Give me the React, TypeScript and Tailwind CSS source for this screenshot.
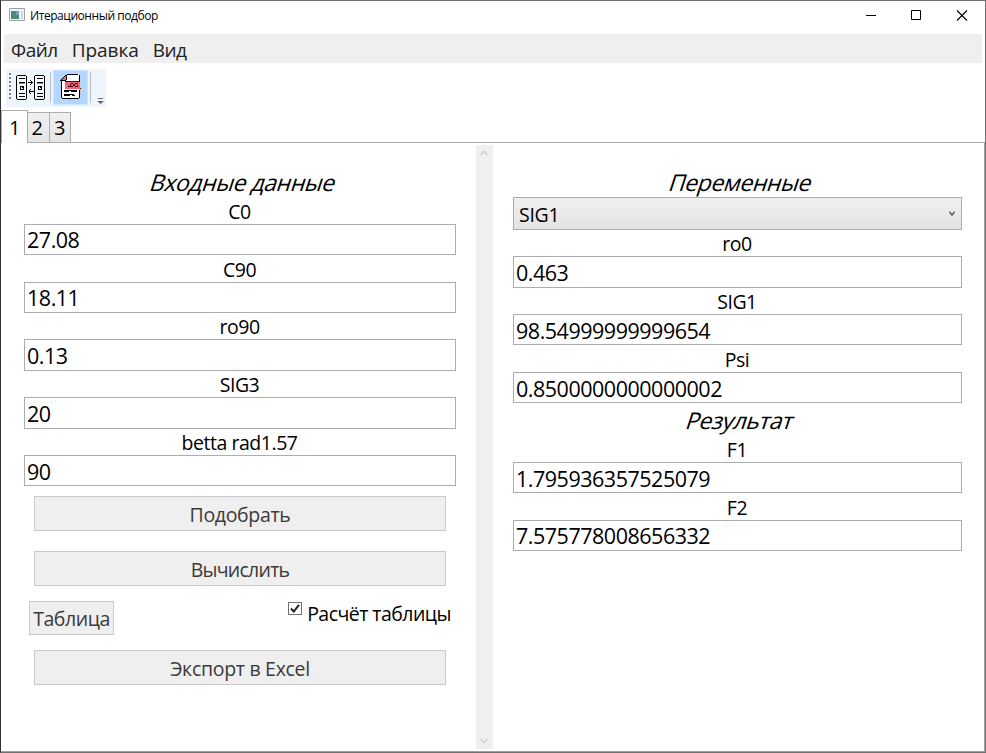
import type { ReactNode } from 'react';

function Label({ children, className = '' }: { children: ReactNode; className?: string }) {
  return (
    <div className={`flex h-[25px] shrink-0 items-center justify-center pr-px text-[19.5px] leading-none tracking-[-0.45px] ${className}`}>
      {children}
    </div>
  );
}

function Heading({ children, className = '' }: { children: ReactNode; className?: string }) {
  return (
    <div className={`flex h-7 shrink-0 items-center justify-center pl-[6px] text-[23px] leading-none tracking-[-0.42px] ${className}`}>
      <span className="inline-block skew-x-[-18deg]">{children}</span>
    </div>
  );
}

function Field({ value, tall = false, low = false }: { value: string; tall?: boolean; low?: boolean }) {
  return (
    <div className={`flex shrink-0 items-center border border-[#abadb3] bg-white pl-[2px] text-[21.5px] leading-none tracking-[-0.48px] ${tall ? 'h-8' : 'h-[31px]'}`}>
      <span className={low ? 'pt-[3px]' : 'pt-px'}>{value}</span>
    </div>
  );
}

function WideButton({ children, className = '' }: { children: ReactNode; className?: string }) {
  return (
    <button className={`mx-[10px] flex h-[35px] shrink-0 items-center justify-center border border-[#c9c9c9] bg-[#efefef] pt-[2px] text-[19.5px] leading-none text-[#3a3a3a] ${className}`}>
      {children}
    </button>
  );
}

function Chevron({ up = false }: { up?: boolean }) {
  return (
    <svg width="8" height="6" viewBox="0 0 8 6" fill="none" stroke="#cdcdcd" strokeWidth="1.5">
      <path d={up ? 'M.500 5L4 1.300 7.500 5' : 'M.500 1L4 4.700 7.500 1'} />
    </svg>
  );
}

function ServersIcon() {
  return (
    <svg width="30" height="25" viewBox="0 0 30 25" fill="none" stroke="#000" shapeRendering="crispEdges">
      {[0, 18].map((x) => (
        <g key={x} transform={`translate(${x} 0)`}>
          <path d="M1 1h9v23H1z" fill="#f4f9fe" stroke="none" />
          <path d="M1 .5h9M1 24.500h9M.5 1v23M10.500 1v23" />
          <path d="M3 3.500h6" />
          <path d="M3 7.500h6" />
          <path d="M3 8.500h6" stroke="#8a8a8a" />
          <path d="M4 11.500h4M4.500 11v4M7.500 12v3M4 14.500h4M6 12.500h1" />
          <path d="M3 18.500h6M3 21.500h6" />
        </g>
      ))}
      <path d="M12 7.500h5M15.500 6v3M14.500 5v1M14.500 9v1" />
      <path d="M13 16.500h5M13.500 15v3M14.500 14v1M14.500 18v1" />
    </svg>
  );
}

function LogIcon() {
  return (
    <svg width="22" height="28" viewBox="0 0 22 28" fill="none" shapeRendering="crispEdges">
      <path d="M7 0h12v25H2V7h5z" fill="#fff" />
      <path d="M6 1v5H1z" fill="#ff5c77" />
      <path d="M7 .5h11M6.500 1v5M0 6.500h6M5 1.500h1M4 2.500h1M3 3.500h1M2 4.500h1M1 5.500h1M1.500 7v17M19.500 1v7M19.500 16v8M2 24.500h17" stroke="#000" />
      <path d="M5 7h15v8H5z" fill="#ff5c77" />
      <path d="M5 7.500h15M20.500 14v1" stroke="#26171a" />
      <path d="M8 12.500h2M11 9.500h2M10.500 10v3M13.500 10v2M11 12.500h2M15 9.500h3M14.500 10v2M15 12.500h3M17.500 11v1" stroke="#26171a" />
      <path d="M4 16.500h13M4 17.500h5M11 17.500h6M4 20.500h10M4 21.500h6M12 21.500h3" stroke="#000" />
      <path d="M20 16.500h1" stroke="#f3a044" />
      <path d="M20 19.500h1" stroke="#ff8294" />
      <path d="M9 26.500h1" stroke="#45bde5" />
    </svg>
  );
}

export default function App() {
  return (
    <div className="flex h-[753px] w-[986px] flex-col overflow-hidden border border-l-[#333] border-r-[#707070] border-t-[#707070] border-b-[#707070] bg-white font-['Open_Sans','Noto_Sans',sans-serif] text-black">
      <header className="flex h-[33px] shrink-0 items-start">
        <svg className="ml-2 mt-[7px]" width="16" height="13" viewBox="0 0 16 13">
          <path d="M.5.500h15v12H.5z" fill="#f0f2f3" stroke="#9aa3a8" />
          <path d="M2 3h8v8H2z" fill="#478c7a" />
          <path d="M7 3h3v4H7z" fill="#6aa6c2" />
          <path d="M12 3h2v8h-2z" fill="#d3dade" />
        </svg>
        <h1 className="ml-[5px] mt-[8px] text-[12px] leading-[14px] tracking-[-0.44px]">Итерационный подбор</h1>
        <div className="ml-auto flex pr-[17px] pt-[9px]">
          <svg width="102" height="11" viewBox="0 0 102 11" fill="none" stroke="#000">
            <path d="M0 5.500h10M45.500.500h9v9h-9z" />
            <path d="M91 .5l10 10M101 .5l-10 10" strokeWidth="1.100" />
          </svg>
        </div>
      </header>
      <nav className="ml-[3px] mr-[3px] flex h-[29px] shrink-0 items-center gap-[14px] bg-[#efefef] pl-[7px] pt-[3px] text-[19px] leading-none text-[#222]">
        <span className="tracking-[-0.5px]">Файл</span>
        <span className="tracking-[-0.05px]">Правка</span>
        <span className="tracking-[-0.5px]">Вид</span>
      </nav>
      <div className="ml-[5px] mt-[6px] flex h-[38px] w-[100px] shrink-0 rounded-[3px] bg-[#eef5fd]">
        <div className="ml-[3px] mt-1 h-[28px] w-[2px] bg-[repeating-linear-gradient(#808080_0_2px,transparent_2px_4px)]" />
        <div className="ml-[5px] mt-[6px]"><ServersIcon /></div>
        <div className="ml-1 mt-[3px] h-[31px] w-px bg-[#b5bcc5]" />
        <div className="ml-[2px] mt-px flex h-[35px] w-[35px] items-start border border-[#cce4fc] bg-[#b3d7ff] pl-[6px] pt-[3px]"><LogIcon /></div>
        <div className="ml-[2px] mt-[3px] h-[31px] w-px bg-[#b5bcc5]" />
        <svg className="ml-[6px] mt-[29px]" width="7" height="6" viewBox="0 0 7 6"><path d="M1 0h5v1H1zM0 3h7L3.500 6z" fill="#666" /></svg>
      </div>
      <div className="flex h-[36px] shrink-0 items-end text-[20px] leading-none tracking-[-0.5px]">
        <div className="flex h-[33px] w-[27px] items-center justify-center border border-b-0 border-[#acacac] bg-white pt-px">1</div>
        <div className="flex h-[31px] w-[22px] items-center justify-center border border-l-0 border-[#acacac] bg-linear-to-b from-[#f0f0f0] to-[#e5e5e5] pr-[3px] pt-px">2</div>
        <div className="flex h-[31px] w-[21px] items-center justify-center border border-l-0 border-[#acacac] bg-linear-to-b from-[#f0f0f0] to-[#e5e5e5] pr-px pt-px">3</div>
        <div className="h-px flex-1 bg-[#acacac]" />
      </div>
      <main className="flex min-h-0 flex-1 border-b border-r border-[#a0a0a0]">
        <section className="ml-[23px] flex w-[432px] flex-col pt-[25px]">
          <Heading>Входные данные</Heading>
          <Label className="mt-[3px]">C0</Label>
          <Field value="27.08" />
          <Label className="mt-[2px]">C90</Label>
          <Field value="18.11" />
          <Label className="mt-px">ro90</Label>
          <Field tall value="0.13" />
          <Label className="mt-px">SIG3</Label>
          <Field tall value="20" />
          <Label className="mt-px">betta rad1.57</Label>
          <Field low value="90" />
          <WideButton className="mt-[10px]">
            <span className="tracking-[-0.35px]">Подобрать</span>
          </WideButton>
          <WideButton className="mt-5">
            <span className="tracking-[-0.75px]">Вычислить</span>
          </WideButton>
          <div className="mt-[15px] flex h-[34px] shrink-0 items-start justify-between px-[5px]">
            <button className="flex h-[34px] w-[85px] items-center justify-center border border-[#c9c9c9] bg-[#efefef] pt-[2px] text-[19.5px] leading-none tracking-[-0.45px] text-[#3a3a3a]">
              Таблица
            </button>
            <label className="flex items-start">
              <span className="mt-px flex h-[13px] w-[14px] items-center justify-center border border-[#707070] bg-white">
                <svg width="10" height="9" viewBox="0 0 10 9" fill="none" stroke="#212121" strokeWidth="2">
                  <path d="M1 4.500L3.800 7.500 9 .8" />
                </svg>
              </span>
              <span className="ml-[5px] mt-[3px] text-[19.5px] leading-[20px] tracking-[-0.53px]">Расчёт таблицы</span>
            </label>
          </div>
          <WideButton className="mt-[15px]">
            <span className="tracking-[-0.3px]">Экспорт в Excel</span>
          </WideButton>
        </section>
        <div className="ml-5 mt-[2px] flex h-[604px] w-[17px] flex-col items-center justify-between bg-[#efefef] py-[5px] pr-px">
          <Chevron up />
          <Chevron />
        </div>
        <section className="ml-5 flex w-[449px] flex-col pt-[25px]">
          <Heading>Переменные</Heading>
          <div className="mt-px flex h-[33px] shrink-0 items-center justify-between border border-[#acacac] bg-linear-to-b from-[#f0f0f0] to-[#e3e3e3] pl-[5px] pr-[6px] text-[19.5px] leading-none tracking-[-0.3px]">
            <span className="pt-[2px]">SIG1</span>
            <svg width="6" height="6" viewBox="0 0 6 6" fill="none" stroke="#606060" strokeWidth="1.600">
              <path d="M.5 .8L3 4 5.500 .8" />
            </svg>
          </div>
          <Label className="mt-px">ro0</Label>
          <Field tall value="0.463" />
          <Label className="mt-px">SIG1</Label>
          <Field low value="98.54999999999654" />
          <Label className="mt-[2px]">Psi</Label>
          <Field low value="0.8500000000000002" />
          <Heading className="mt-[3px]">Результат</Heading>
          <Label className="mt-[3px]">F1</Label>
          <Field low value="1.795936357525079" />
          <Label className="mt-[2px]">F2</Label>
          <Field value="7.575778008656332" />
        </section>
      </main>
    </div>
  );
}
